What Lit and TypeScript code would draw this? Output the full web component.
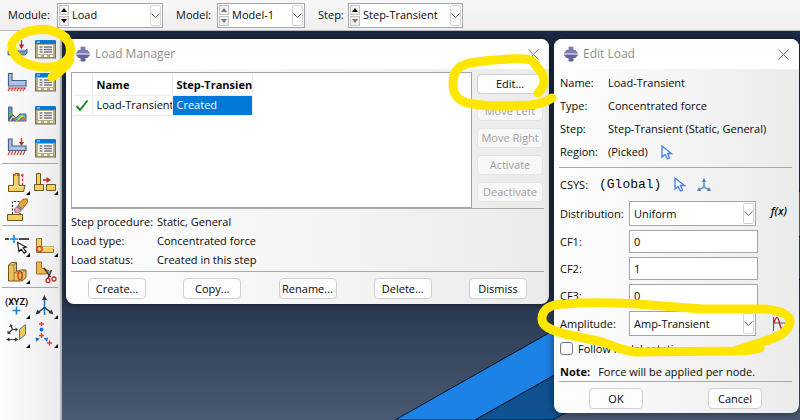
import { LitElement, html, svg, css, nothing } from "lit";
import { customElement, property } from "lit/decorators.js";

const corner = svg`<path d="M24 20v4h-4z" fill="#000"/>`;

const manager = svg`
  <rect x="1.5" y="4" width="20" height="17" fill="#b5ac82" stroke="#777052"/>
  <path d="M1 7V5q0-2 2-2h17q2 0 2 2v2z" fill="#0878d0"/>
  <path d="M3 5h3" stroke="#d6efff"/>
  <rect x="4" y="8" width="15" height="9" fill="#fff"/>
  <path d="M5.500 10h3M5.500 12.500h3M5.500 15h3M10 10h8M10 12.500h8M10 15h8" stroke="#74757c" stroke-width="1.300"/>
  <path d="M4 19h3M10 19h3M16 19h3" stroke="#f6f2dc" stroke-width="2"/>`;

const icons: Record<string, unknown> = {
  manager,
  load: svg`<path d="M2 14l2-2h17l-2 2z" fill="#c4d9f5"/><path d="M2 14h17l2-2v4l-2 2H2z" fill="#7398cb" stroke="#3f5680" stroke-width=".8"/>
    <path d="M15.500 3v8" stroke="#c3261c" stroke-width="1.200"/><path d="M12.700 7.500h5.600L15.500 12z" fill="#c3261c"/>`,
  bc: svg`<path d="M2.500 3.500h3.500v7h14v5.500H2.500z" fill="#a9c3ea" stroke="#4b5f86" stroke-width="1.200"/>
    <path d="M2 18h18" stroke="#d02c20"/><path d="M4 18l-2 3M7 18l-2 3M10 18l-2 3M13 18l-2 3M16 18l-2 3M19 18l-2 3" stroke="#d02c20" stroke-width="1.100"/>`,
  field: svg`<path d="M2.500 4h3.500v7l4 4 4-4h6v7H2.500z" fill="#45b7c4" stroke="#596483"/>
    <path d="M3 4.500h3v3z" fill="#8e4ad0"/><path d="M3 8l3 3v2l-3-1z" fill="#55c445"/><path d="M3 14l4-2 4 5.500H3z" fill="#3559dd"/>
    <path d="M4 17.500l3-4 4 4 5-5 3 4" fill="none" stroke="#e3dc43" stroke-width="1.300"/><path d="M7 17.500l2-2 3 2M14 17.500l3-3 3 3" fill="none" stroke="#e25032" stroke-width="1.200"/>`,
  loadcase: svg`<path d="M2.500 3h3.500v7h14v4.500H2.500z" fill="#a9c3ea" stroke="#4b5f86" stroke-width="1.200"/>
    <path d="M4 15l-2 4M7 15l-2 4M10 15l-2 4M13 15l-2 4M16 15l-2 4M19 15l-2 4" stroke="#d02c20" stroke-width="1.100"/>
    <path d="M15.500 2v6" stroke="#c3261c" stroke-width="1.200"/><path d="M13 6h5l-2.500 4z" fill="#c3261c"/>`,
  partition: svg`<path d="M7.500 4l1.500-1.500h4V14.500h6l-1.500 6h-15v-6h5z" fill="#f4cf62" stroke="#6e5523"/>
    <path d="M3 15.500h15" stroke="#ffeaa1"/><path d="M7 4h10.500M16.500 4v10" stroke="#d23322" stroke-width="1.300" stroke-dasharray="2.500 1.500" fill="none"/>${corner}`,
  move: svg`<path d="M2.500 2.500h4v11h-4zM.5 13.500h9v6h-9zM12.500 13.500h9v6h-9z" fill="#f4cf62" stroke="#6e5523"/>
    <path d="M9 9h4" stroke="#d2261a" stroke-width="1.600"/><path d="M12.500 6l4.500 3-4.500 3z" fill="#d2261a"/>${corner}`,
  erase: svg`<path d="M1.500 16.500h15v6h-15z" fill="#f4cf62" stroke="#6e5523"/><path d="M6.500 16V3.500H14V16" fill="none" stroke="#222" stroke-dasharray="2 1.500"/>
    <path d="M12 7l5-6h4.500v3.500l-5.500 7z" fill="#e7a137" stroke="#7b5221" stroke-width=".8"/><path d="M8.500 11l2.500-2.500 4 4-2.500 2.500-3.500-.5z" fill="#f0a3ac" stroke="#8f4b54" stroke-width=".8"/><path d="M10.500 8.500L12 7l4.200 4.300-1.500 1.700z" fill="#7b88ad"/>`,
  pick: svg`<path d="M-1 6h4M13 6h10" stroke="#111" stroke-width="1.500"/><path d="M4 6h8M8 2v8" stroke="#1687e8" stroke-width="1.600"/>
    <path d="M11.500 9.500l1.500 9 2.200-2.200 3 4 2-1.500-3-4 3-.8z" fill="#fff" stroke="#111" stroke-width="1.100"/>${corner}`,
  datum: svg`<path d="M2.500 5.500h5v8h12v6h-17z" fill="#f4cf62" stroke="#8b702e"/><path d="M8 14h11l1 2" stroke="#ffeaa1" fill="none"/><circle cx="5.500" cy="16" r="2.600" fill="none" stroke="#dc3b22" stroke-width="1.300"/>${corner}`,
  solid: svg`<path d="M2.500 5l3-2.500h5v9l4-1.500h5.500v7.500l-4 3.500H2.500z" fill="#edc25a" stroke="#6e5523"/><path d="M2.500 5h5.500v8l2.500-1.500M8 5l2.500-2.500M8 13v8M8 13h8v8M16 13l4-3" fill="none" stroke="#8b702e" stroke-width=".8"/>
    <ellipse cx="14" cy="15.500" rx="2" ry="4" fill="none" stroke="#d02c20" stroke-width="1.200"/>${corner}`,
  cut: svg`<path d="M2.500 2h5v6l8 3-3 3H2.500z" fill="#f0b64a" stroke="#9b7026"/><path d="M10 8l6.500 9M17.500 10l-3.500 8" stroke="#35353b" stroke-width="1.500"/>
    <circle cx="14" cy="20.500" r="2" fill="none" stroke="#c32a2a" stroke-width="1.300"/><circle cx="20" cy="19" r="2" fill="none" stroke="#c32a2a" stroke-width="1.300"/>`,
  xyz: svg`<text x="-1" y="10" font-family="Roboto, sans-serif" font-weight="700" font-size="9" fill="#111">(XYZ)</text><path d="M6.500 15.500h8M10.500 11.500v8" stroke="#1687e8" stroke-width="1.600"/>${corner}`,
  axes: svg`<path d="M10.500 3v17" stroke="#1780d8" stroke-width="1.600"/><path d="M10.500 12.500L4 17.500M10.500 12.500l6.500 5" stroke="#333" stroke-width="1.500"/>
    <path d="M8 5l2.500-5L13 5zM1.500 19.500l2-5 3 3.500zM19.500 19.500l-2-5-3 3.500z" fill="#28384c"/>${corner}`,
  plane: svg`<path d="M13.500 5.500l6-5v10l-6 5z" fill="#f2c462" stroke="#2f80be"/><path d="M6.500 5.500L5 1.500M6.500 5.500H11M6.500 5.500L3 8.500M2 15.500h9" stroke="#333" stroke-width="1.200"/>
    <path d="M3 3l1.500-3L7 2zM9.500 3.500l2.500 2-2.500 2zM1.500 6.500v3.500h3.500zM3.500 13.500v4L0 15.500zM9 13.500v4l3.500-2z" fill="#333"/>${corner}`,
  nodes: svg`<path d="M7.500 1v10l-4 4.500M7.500 11.500l5 4" stroke="#9bbfe2" fill="none" stroke-dasharray="1.500 1.500"/><path d="M5 0h5M7.500-2v4M5 11.500h5M7.500 9v5M13 19h5M15.500 16.500v5" stroke="#e04832" stroke-width="1.400"/>
    <circle cx="7.500" cy="5.500" r="1.900" fill="#0c6ee0"/><path d="M1.500 13.500l4 1-3 3.500zM14 13.500l-4 1 3 3.500z" fill="#0c6ee0"/>${corner}`,
};

const shared = css`
  :host { font-family: "Open Sans", "Noto Sans", sans-serif; font-size: 11px; line-height: 16px; color: #0a0a0a; }
  * { box-sizing: border-box; }
  button, input, select { font: inherit; color: inherit; margin: 0; padding: 0; }
  svg { display: block; overflow: visible; }
`;

@customElement("combo-box")
class ComboBox extends LitElement {
  @property() label = "";
  @property() value = "";
  @property({ type: Boolean }) spin = false;
  @property({ type: Boolean }) muted = false;
  @property({ type: Boolean }) down = false;

  static styles = [shared, css`
    :host { display: block; min-width: 0; }
    .box { display: flex; align-items: stretch; height: 25px; border: 1px solid #a3a5ac; background: #fff; padding: 1px; }
    .spins { display: flex; flex-direction: column; width: 10px; gap: 1px; }
    .spin { flex: 1; display: grid; place-items: center; border: 1px solid #c6c6c6; background: #f0f0f0; }
    .off { color: #777; }
    .pick { position: relative; display: flex; flex: 1; min-width: 0; }
    select { appearance: none; border: 0; background: none; flex: 1; min-width: 0; padding-left: 3px; outline: 0; }
    .arrow { position: absolute; right: 0; top: 0; bottom: 0; width: 11px; border: 1px solid #d4d4d4; border-radius: 2px; background: #fff; display: grid; place-items: center; pointer-events: none; }
  `];

  render() {
    return html`<div class="box">
      ${this.spin ? html`<div class="spins">
        <button class="spin ${this.muted ? "off" : ""}" aria-label="Previous"><svg width="6" height="4"><path d="M3 0l3 4H0z" fill="currentColor"/></svg></button>
        <button class="spin ${this.muted || !this.down ? "off" : ""}" aria-label="Next"><svg width="6" height="4"><path d="M0 0h6L3 4z" fill="currentColor"/></svg></button>
      </div>` : nothing}
      <div class="pick">
        <select aria-label=${this.label}><option>${this.value}</option></select>
        <span class="arrow"><svg width="9" height="5"><path d="M.5.5l4 4 4-4" fill="none" stroke="#666"/></svg></span>
      </div>
    </div>`;
  }
}

@customElement("dialog-window")
class DialogWindow extends LitElement {
  @property() heading = "";

  static styles = [shared, css`
    :host { display: flex; flex-direction: column; border-radius: 8px; overflow: hidden; background: linear-gradient(90deg, #fefefe, #ebebeb); box-shadow: 0 0 8px #0008; }
    .bar { display: flex; align-items: center; gap: 5px; height: 30px; padding: 0 10px; background: #fff; color: #8d8d8d; }
    .title { flex: 1; font: inherit; font-size: 12px; margin: 0; }
    .close { border: 0; background: none; color: #777; }
  `];

  render() {
    return html`<header class="bar">
        <svg width="14" height="16" viewBox="0 0 14 16"><path d="M4.500 1q2.500-1 5 0v3h2L14 7v.5H0V7l2.500-3h2z" fill="#7b7bb1"/><path d="M0 8.500h14V9l-2.500 3h-2v3q-2.500 1-5 0v-3h-2L0 9z" fill="#63639e"/></svg>
        <h2 class="title">${this.heading}</h2>
        <button class="close" aria-label="Close"><svg width="11" height="11"><path d="M.5.5l10 10M10.500.5l-10 10" stroke="currentColor"/></svg></button>
      </header>
      <slot></slot>`;
  }
}

@customElement("tool-palette")
class ToolPalette extends LitElement {
  static styles = [shared, css`
    :host { display: block; width: 62px; background: linear-gradient(90deg, #fdfdfd, #ececec); border-right: 2px solid #b4b7bc; }
    .group { display: grid; grid-template-columns: 24px 24px; column-gap: 4px; row-gap: 3px; margin: 0 2px; padding: 7px 4px 3px; border-bottom: 1px solid #a8a8a8; }
    .group:first-child { row-gap: 9px; padding-top: 6px; }
    .group:last-child { row-gap: 5px; border: 0; }
    .tool { width: 24px; height: 24px; border: 0; background: none; }
  `];

  render() {
    const groups = [
      ["load", "manager", "bc", "manager", "field", "manager", "loadcase", "manager"],
      ["partition", "move", "erase"],
      ["pick", "datum", "solid", "cut"],
      ["xyz", "axes", "plane", "nodes"],
    ];
    return groups.map((g) => html`<div class="group">${g.map((n) => html`<button class="tool" aria-label=${n}><svg width="24" height="24" viewBox="0 0 24 24">${icons[n]}</svg></button>`)}</div>`);
  }
}

@customElement("load-manager")
class LoadManager extends LitElement {
  static styles = [shared, css`
    :host { display: block; }
    .top { display: flex; gap: 5px; padding: 3px 6px 0 5px; }
    .list { flex: 1; height: 136px; background: #fff; border: 1px solid #a3a5ac; padding: 2px; overflow: hidden; }
    table { border-collapse: collapse; table-layout: fixed; width: 178px; }
    .mark { width: 18px; }
    .col { width: 80px; }
    th, td { height: 20px; padding: 0 0 0 4px; text-align: left; white-space: nowrap; overflow: hidden; border-right: 1px solid #ececec; border-bottom: 1px solid #ececec; }
    .tick { padding-left: 2px; }
    .chosen { background: #0078d7; color: #fff; }
    .side { display: flex; flex-direction: column; gap: 7px; width: 66px; padding-top: 2px; }
    .btn { height: 20px; border: 1px solid #d0d0d0; border-radius: 4px; background: #fdfdfd; white-space: nowrap; }
    .btn:disabled { color: #a0a0a0; border-color: #e4e4e4; background: #f7f7f7; }
    dl { display: grid; grid-template-columns: 86px 1fr; row-gap: 3px; margin: 0 5px; padding: 5px 0 3px; border: solid #a8a8a8; border-width: 1px 0; }
    dt { white-space: nowrap; }
    dd { margin: 0; }
    .foot { display: flex; justify-content: space-between; padding: 6px 22px 5px; }
    .foot .btn { width: 58px; height: 21px; }
  `];

  render() {
    return html`<div class="top">
        <div class="list"><table>
          <colgroup><col class="mark"><col class="col"><col class="col"></colgroup>
          <thead><tr><th></th><th>Name</th><th>Step-Transient</th></tr></thead>
          <tbody><tr><td class="tick"><svg width="12" height="11"><path d="M.5 6l3.500 4L11.500.5" fill="none" stroke="#168a1c" stroke-width="2"/></svg></td><td>Load-Transient</td><td class="chosen">Created</td></tr></tbody>
        </table></div>
        <div class="side">
          <button class="btn">Edit...</button>
          ${["Move Left", "Move Right", "Activate", "Deactivate"].map((t) => html`<button class="btn" disabled>${t}</button>`)}
        </div>
      </div>
      <dl>
        <dt>Step procedure:</dt><dd>Static, General</dd>
        <dt>Load type:</dt><dd>Concentrated force</dd>
        <dt>Load status:</dt><dd>Created in this step</dd>
      </dl>
      <div class="foot">${["Create...", "Copy...", "Rename...", "Delete...", "Dismiss"].map((t) => html`<button class="btn">${t}</button>`)}</div>`;
  }
}

const cursor = html`<svg width="11" height="15" viewBox="0 0 11 15"><path d="M1 1v11l3-2.500 2.500 4.500 2-1-2-4.500h4z" fill="#fff" stroke="#3e7bf0" stroke-width="1.300"/></svg>`;

@customElement("edit-load")
class EditLoad extends LitElement {
  static styles = [shared, css`
    :host { display: block; padding: 0 7px 4px 5px; }
    .facts { display: grid; grid-template-columns: 48px 1fr; row-gap: 7px; margin: 0; padding: 6px 1px 7px; border-bottom: 1px solid #a8a8a8; }
    dd { margin: 0; }
    .inline { display: flex; align-items: center; gap: 13px; }
    .icon { border: 0; background: none; height: 16px; }
    .csys { display: grid; grid-template-columns: 39px 75px 23px auto; justify-content: start; align-items: center; height: 33px; padding: 0 1px; }
    .mono { font-family: "Liberation Mono", monospace; font-size: 13px; }
    .rows { display: grid; grid-template-columns: 69px 129px 1fr; row-gap: 4px; align-items: center; padding: 0 1px; }
    .num { grid-column: 2; width: 129px; height: 23px; border: 1px solid #a3a5ac; background: #fff; padding-left: 4px; }
    combo-box { margin-right: 2px; }
    .side { justify-self: end; border: 0; background: none; }
    .fx { font-style: italic; font-weight: 600; padding: 0 4px 6px 0; }
    .check { display: flex; align-items: center; gap: 5px; height: 25px; padding: 0 1px; }
    .check input { appearance: none; width: 13px; height: 13px; border: 1px solid #777; border-radius: 3px; background: #f8f8f8; }
    .note { display: flex; gap: 8px; margin: 0; padding: 3px 1px 1px; border-bottom: 1px solid #a8a8a8; }
    .foot { display: flex; justify-content: space-between; padding: 6px 30px 0; }
    .btn { width: 54px; height: 21px; border: 1px solid #d0d0d0; border-radius: 4px; background: #fdfdfd; }
  `];

  render() {
    return html`<dl class="facts">
        <dt>Name:</dt><dd>Load-Transient</dd>
        <dt>Type:</dt><dd>Concentrated force</dd>
        <dt>Step:</dt><dd>Step-Transient (Static, General)</dd>
        <dt>Region:</dt><dd class="inline">(Picked)<button class="icon" aria-label="Edit region">${cursor}</button></dd>
      </dl>
      <div class="csys"><span>CSYS:</span><span class="mono">(Global)</span>
        <button class="icon" aria-label="Edit system">${cursor}</button>
        <button class="icon" aria-label="Create system"><svg width="14" height="14" viewBox="0 0 14 14"><path d="M7 1v8l-5 3M7 9l5 3" fill="none" stroke="#4583bd" stroke-width="1.300"/><path d="M5 4l2-4 2 4zM0 13l2-4 2 4zM14 13l-2-4-2 4z" fill="#4583bd"/></svg></button>
      </div>
      <div class="rows">
        <span>Distribution:</span><combo-box label="Distribution" value="Uniform"></combo-box><button class="side fx">f(x)</button>
        ${[["CF1", "0"], ["CF2", "1"], ["CF3", "0"]].map(([k, v]) => html`<label for=${k}>${k}:</label><input class="num" id=${k} .value=${v}><span></span>`)}
        <span>Amplitude:</span><combo-box label="Amplitude" value="Amp-Transient"></combo-box>
        <button class="side" aria-label="Create amplitude"><svg width="20" height="14" viewBox="0 0 20 14"><path d="M2.500 0v14M2 6h17" stroke="#555" fill="none"/><path d="M3 6q3-11 5.500 0t6 4L19 2" fill="none" stroke="#c3222d" stroke-width="1.400"/></svg></button>
      </div>
      <label class="check"><input type="checkbox">Follow nodal rotation</label>
      <p class="note"><b>Note:</b>Force will be applied per node.</p>
      <div class="foot"><button class="btn">OK</button><button class="btn">Cancel</button></div>`;
  }
}

@customElement("app-root")
class AppRoot extends LitElement {
  static styles = [shared, css`
    :host { display: flex; flex-direction: column; min-height: 100vh; position: relative; overflow: hidden; }
    .context { display: flex; align-items: center; gap: 13px; height: 31px; padding: 0 8px; background: linear-gradient(#f8f8f8, #efefef); border-bottom: 1px solid #bbb; }
    .field { display: flex; align-items: center; gap: 4px; }
    .module { width: 155px; }
    .model { width: 129px; }
    .step { width: 145px; }
    .field combo-box { margin-left: auto; }
    .wide { width: 106px; }
    .narrow { width: 88px; }
    .widest { width: 115px; }
    .work { flex: 1; display: flex; }
    .view { flex: 1; position: relative; overflow: hidden; background: linear-gradient(#1b2a45, #23324b 65%, #4b5a73); }
    .model-part, .marks { position: absolute; left: 0; top: 0; }
    .marks { pointer-events: none; }
    .manager { position: absolute; left: 66px; top: 39px; width: 483px; }
    .editor { position: absolute; left: 554px; top: 39px; width: 245px; }
  `];

  render() {
    return html`<nav class="context">
        <div class="field module">Module:<combo-box class="wide" label="Module" value="Load" spin down></combo-box></div>
        <div class="field model">Model:<combo-box class="narrow" label="Model" value="Model-1" spin muted></combo-box></div>
        <div class="field step">Step:<combo-box class="widest" label="Step" value="Step-Transient" spin></combo-box></div>
      </nav>
      <main class="work">
        <tool-palette></tool-palette>
        <div class="view"><svg class="model-part" width="738" height="389" viewBox="62 31 738 389">
          <path d="M395 420L802 190v46L475 420z" fill="#1c82e6" stroke="#081525"/>
          <path d="M475 420L802 235v43L553 420z" fill="#0f5191" stroke="#081525"/>
        </svg></div>
      </main>
      <dialog-window class="manager" heading="Load Manager"><load-manager></load-manager></dialog-window>
      <dialog-window class="editor" heading="Edit Load"><edit-load></edit-load></dialog-window>
      <svg class="marks" width="800" height="420" fill="none" stroke="#ffe600" stroke-width="9" stroke-linecap="round" stroke-linejoin="round">
        <path d="M66 38C58 31 46 28 35 30C20 32 10 41 12 48C14 58 24 64 35 66C47 69 60 67 67 60C72 54 72 43 64 37M70 60Q66 68 52 77"/>
        <path d="M538 93C548 84 544 74 537 67C533 60 530 59 524 59C505 58 480 61 466 64C454 68 453 76 453 86C454 98 461 102 473 104C492 107 515 106 530 105C540 104 546 102 552 98"/>
        <path d="M760 348Q750 351 735 351L635 352C620 350 612 345 602 342L565 334C550 330 542 326 542 319C542 308 552 304 565 304C590 302 625 303 650 305L702 309L765 309C785 311 790 316 790 322C788 334 775 338 762 342L737 350"/>
      </svg>`;
  }
}
